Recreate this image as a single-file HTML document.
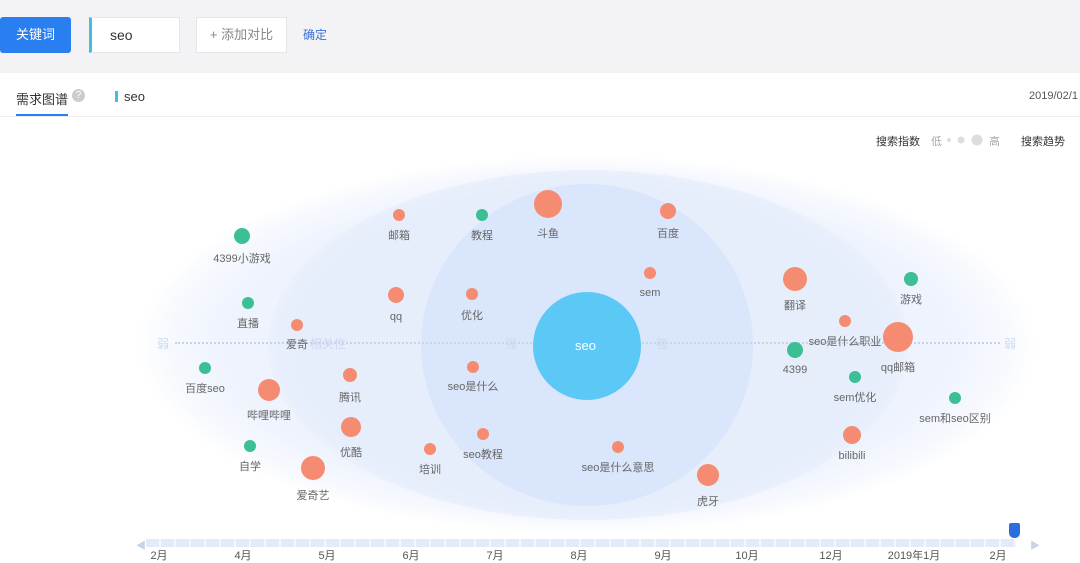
<!DOCTYPE html><html><head><meta charset="utf-8"><style>
body{margin:0;width:1080px;height:562px;overflow:hidden;background:#fff;font-family:"Liberation Sans","Noto Sans CJK SC",sans-serif;position:relative}
.a{position:absolute}
.b{position:absolute;border-radius:50%;transform:translate(-50%,-50%)}
.l{position:absolute;transform:translateX(-50%);font-size:11px;color:#666;white-space:nowrap}
.m{position:absolute;font-size:11px;color:#555;transform:translateX(-50%)}
</style></head><body>
<div class="a" style="left:0;top:0;width:1080px;height:73px;background:#f3f3f5"></div>
<div class="a" style="left:0;top:17px;width:71px;height:36px;background:#2a7ff0;border-radius:3px;color:#fff;font-size:13px;line-height:36px;text-align:center">关键词</div>
<div class="a" style="left:89px;top:17px;width:91px;height:36px;background:#fff;border:1px solid #e6e6e6;border-left:3px solid #3fc0e0;box-sizing:border-box;font-size:14px;line-height:34px;padding-left:18px;color:#333">seo</div>
<div class="a" style="left:196px;top:17px;width:91px;height:36px;background:#fff;border:1px solid #e6e6e6;box-sizing:border-box;font-size:13px;line-height:34px;text-align:center;color:#888">+ 添加对比</div>
<div class="a" style="left:303px;top:26px;font-size:12px;color:#3a70d8">确定</div>
<div class="a" style="left:16px;top:89px;font-size:13px;color:#333">需求图谱</div>
<div class="a" style="left:72px;top:89px;width:13px;height:13px;border-radius:50%;background:#ccc;color:#fff;font-size:10px;text-align:center;line-height:13px">?</div>
<div class="a" style="left:16px;top:114px;width:52px;height:2px;background:#2a7ff0"></div>
<div class="a" style="left:0;top:116px;width:1080px;height:1px;background:#eee"></div>
<div class="a" style="left:115px;top:91px;width:3px;height:11px;background:#3fc0e0"></div>
<div class="a" style="left:124px;top:89px;font-size:13px;color:#333">seo</div>
<div class="a" style="left:1029px;top:90px;font-size:11px;color:#555">2019/02/1</div>
<div class="a" style="left:876px;top:133px;font-size:11px;color:#333">搜索指数</div>
<div class="a" style="left:931px;top:133px;font-size:11px;color:#aaa">低</div>
<div class="b" style="left:949px;top:140px;width:4px;height:4px;background:#ddd"></div>
<div class="b" style="left:961px;top:140px;width:7px;height:7px;background:#ddd"></div>
<div class="b" style="left:977px;top:140px;width:11px;height:11px;background:#ddd"></div>
<div class="a" style="left:989px;top:133px;font-size:11px;color:#aaa">高</div>
<div class="a" style="left:1021px;top:133px;font-size:11px;color:#333">搜索趋势</div>
<div class="b" style="left:587px;top:345px;width:900px;height:380px;background:radial-gradient(ellipse closest-side,#eef3fd 80%,#f7f9fe 93%,#fff 100%)"></div>
<div class="b" style="left:588px;top:345px;width:640px;height:350px;background:radial-gradient(ellipse closest-side,#e6eefc 92%,#eaf0fc 100%)"></div>
<div class="b" style="left:587px;top:345px;width:332px;height:322px;background:#dae6fb"></div>
<div class="a" style="left:175px;top:342px;width:825px;border-top:2px dotted #c8d3e8"></div>
<div class="a" style="left:157px;top:335px;font-size:12px;color:#cdd8ee">弱</div>
<div class="a" style="left:310px;top:335px;font-size:12px;color:#cdd8ee">相关性</div>
<div class="a" style="left:505px;top:335px;font-size:12px;color:#cdd8ee">强</div>
<div class="a" style="left:656px;top:335px;font-size:12px;color:#cdd8ee">强</div>
<div class="a" style="left:1004px;top:335px;font-size:12px;color:#cdd8ee">弱</div>
<div class="b" style="left:587px;top:346px;width:108px;height:108px;background:#5bc8f5"></div>
<div class="a" style="left:575px;top:338px;font-size:13px;color:#fff">seo</div>
<div id="bb"></div>
<script>
var O='#f58c72',G='#3cbf94';
var d=[["斗鱼",548,204,14,O,232],["邮箱",399,215,6,O,234],["教程",482,215,6,G,234],["百度",668,211,8,O,232],["4399小游戏",242,236,8,G,257],["sem",650,273,6,O,294],["翻译",795,279,12,O,304],["游戏",911,279,7,G,298],["直播",248,303,6,G,322],["qq",396,295,8,O,318],["优化",472,294,6,O,314],["爱奇",297,325,6,O,343],["seo是什么职业",845,321,6,O,340],["qq邮箱",898,337,15,O,366],["4399",795,350,8,G,371],["百度seo",205,368,6,G,387],["腾讯",350,375,7,O,396],["seo是什么",473,367,6,O,385],["sem优化",855,377,6,G,396],["哔哩哔哩",269,390,11,O,414],["sem和seo区别",955,398,6,G,417],["优酷",351,427,10,O,451],["seo教程",483,434,6,O,453],["培训",430,449,6,O,468],["seo是什么意思",618,447,6,O,466],["bilibili",852,435,9,O,457],["自学",250,446,6,G,465],["爱奇艺",313,468,12,O,494],["虎牙",708,475,11,O,500]];
var h='';d.forEach(function(e){h+='<div class="b" style="left:'+e[1]+'px;top:'+e[2]+'px;width:'+e[3]*2+'px;height:'+e[3]*2+'px;background:'+e[4]+'"></div><div class="l" style="left:'+e[1]+'px;top:'+(e[5]-7)+'px">'+e[0]+'</div>';});
document.getElementById('bb').outerHTML=h;
</script>
<div class="a" style="left:146px;top:539px;width:870px;height:8px;background:repeating-linear-gradient(90deg,#e3eaf8 0 13px,#f3f6fc 13px 15px)"></div>
<div class="a" style="left:136px;top:537px;font-size:10px;color:#c8d3e8">◀</div>
<div class="a" style="left:1030px;top:537px;font-size:10px;color:#c8d3e8">▶</div>
<div class="a" style="left:1009px;top:523px;width:11px;height:15px;background:#2a6fe0;border-radius:2px 2px 5px 5px"></div>
<div class="m" style="left:159px;top:547px">2月</div><div class="m" style="left:243px;top:547px">4月</div><div class="m" style="left:327px;top:547px">5月</div><div class="m" style="left:411px;top:547px">6月</div><div class="m" style="left:495px;top:547px">7月</div><div class="m" style="left:579px;top:547px">8月</div><div class="m" style="left:663px;top:547px">9月</div><div class="m" style="left:747px;top:547px">10月</div><div class="m" style="left:831px;top:547px">12月</div><div class="m" style="left:914px;top:547px">2019年1月</div><div class="m" style="left:998px;top:547px">2月</div>
</body></html>
